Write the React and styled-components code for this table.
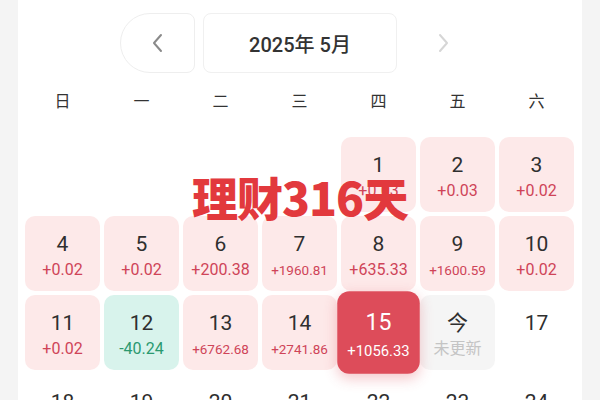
import React from 'react'
import styled, { createGlobalStyle } from 'styled-components'

const GlobalStyle = createGlobalStyle`
  body {
    margin: 0;
    background: #f4f4f4;
    font-family: Roboto, 'Noto Sans CJK SC', sans-serif;
  }
`

const Panel = styled.div`
  position: relative;
  width: 564px;
  height: 400px;
  margin-left: 18px;
  background: #fff;
  overflow: hidden;
`

const Nav = styled.div`
  display: flex;
  justify-content: center;
  gap: 8px;
  padding-top: 13px;
  margin-left: -18px;
  width: 600px;
`

const NavBtn = styled.div`
  width: 75px;
  height: 60px;
  box-sizing: border-box;
  border: 1px solid ${(p) => (p.faded ? 'transparent' : '#eeeeee')};
  border-radius: ${(p) => (p.faded ? '8px' : '30px 8px 8px 30px')};
  display: flex;
  align-items: center;
  justify-content: center;
  color: ${(p) => (p.faded ? '#d6d6d6' : '#8a8a8a')};
`

const Title = styled.div`
  width: 194px;
  height: 60px;
  box-sizing: border-box;
  border: 1px solid #f0f0f0;
  border-radius: 8px;
  display: flex;
  align-items: center;
  justify-content: center;
  font-size: 20px;
  font-weight: 500;
  color: #333;
`

const Grid = styled.div`
  display: grid;
  grid-template-columns: repeat(7, 75px);
  column-gap: 4px;
  row-gap: 4px;
  padding-left: 7px;
`

const WeekLabel = styled.div`
  height: 30px;
  margin-top: 12px;
  margin-bottom: 18px;
  display: flex;
  align-items: center;
  justify-content: center;
  font-size: 16px;
  color: #333;
`

const tones = {
  up: { bg: '#fde9e9', num: '#2f2f2f', val: '#cf4458' },
  down: { bg: '#d8f3ec', num: '#2f2f2f', val: '#2a9970' },
  active: { bg: '#dd4c5a', num: '#ffffff', val: '#ffffff' },
  today: { bg: '#f5f5f5', num: '#2f2f2f', val: '#c4c4c4' },
  none: { bg: 'transparent', num: '#2f2f2f', val: '#999' },
}

const Cell = styled.div`
  height: 75px;
  border-radius: 10px;
  background: ${(p) => tones[p.tone].bg};
  display: flex;
  flex-direction: column;
  align-items: center;
  box-sizing: border-box;
  padding-top: 15px;
  ${(p) =>
    p.tone === 'active' &&
    `
    transform: scale(1.1);
    border-radius: 11px;
    box-shadow: 0 4px 12px rgba(221, 76, 90, 0.3);
    z-index: 1;
  `}
`

const Num = styled.div`
  font-size: 21px;
  line-height: 26px;
  color: ${(p) => tones[p.tone].num};
`

const Val = styled.div`
  margin-top: 3px;
  font-size: ${(p) => (p.small ? '13.5px' : '16px')};
  line-height: 20px;
  color: ${(p) => tones[p.tone].val};
`

const Banner = styled.div`
  position: absolute;
  top: 168px;
  left: -18px;
  width: 600px;
  text-align: center;
  font-size: 46px;
  font-weight: 900;
  line-height: 56px;
  color: #e2393d;
  letter-spacing: -1px;
  font-family: 'Noto Sans CJK SC', Roboto, sans-serif;
`

const Chevron = ({ dir }) => (
  <svg width="18" height="22" viewBox="0 0 18 22" fill="none">
    <path
      d={dir === 'left' ? 'M12 3 L5 11 L12 19' : 'M6 3 L13 11 L6 19'}
      stroke="currentColor"
      strokeWidth="2"
      strokeLinecap="round"
      strokeLinejoin="round"
    />
  </svg>
)

const weekdays = ['日', '一', '二', '三', '四', '五', '六']

const days = [
  null, null, null, null,
  { n: '1', v: '+0.03', t: 'up' },
  { n: '2', v: '+0.03', t: 'up' },
  { n: '3', v: '+0.02', t: 'up' },
  { n: '4', v: '+0.02', t: 'up' },
  { n: '5', v: '+0.02', t: 'up' },
  { n: '6', v: '+200.38', t: 'up' },
  { n: '7', v: '+1960.81', t: 'up' },
  { n: '8', v: '+635.33', t: 'up' },
  { n: '9', v: '+1600.59', t: 'up' },
  { n: '10', v: '+0.02', t: 'up' },
  { n: '11', v: '+0.02', t: 'up' },
  { n: '12', v: '-40.24', t: 'down' },
  { n: '13', v: '+6762.68', t: 'up' },
  { n: '14', v: '+2741.86', t: 'up' },
  { n: '15', v: '+1056.33', t: 'active' },
  { n: '今', v: '未更新', t: 'today' },
  { n: '17', t: 'none' },
  { n: '18', t: 'none' },
  { n: '19', t: 'none' },
  { n: '20', t: 'none' },
  { n: '21', t: 'none' },
  { n: '22', t: 'none' },
  { n: '23', t: 'none' },
  { n: '24', t: 'none' },
]

export default function App() {
  return (
    <>
      <GlobalStyle />
      <Panel>
        <Nav>
          <NavBtn>
            <Chevron dir="left" />
          </NavBtn>
          <Title>2025年 5月</Title>
          <NavBtn faded>
            <Chevron dir="right" />
          </NavBtn>
        </Nav>
        <Grid>
          {weekdays.map((w) => (
            <WeekLabel key={w}>{w}</WeekLabel>
          ))}
          {days.map((d, i) =>
            d ? (
              <Cell key={i} tone={d.t}>
                <Num tone={d.t}>{d.n}</Num>
                {d.v && (
                  <Val tone={d.t} small={d.v.length > 7 && d.t !== 'today'}>
                    {d.v}
                  </Val>
                )}
              </Cell>
            ) : (
              <div key={i} />
            )
          )}
        </Grid>
        <Banner>理财316天</Banner>
      </Panel>
    </>
  )
}
